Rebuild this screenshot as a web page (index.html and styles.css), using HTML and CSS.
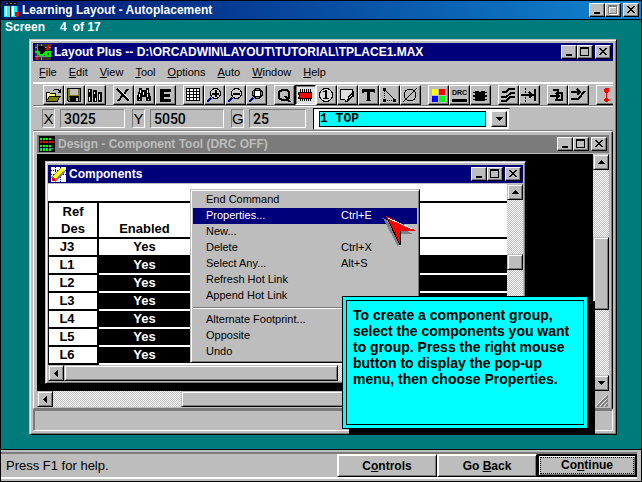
FILE: index.html
```html
<!DOCTYPE html>
<html lang="en">
<head>
<meta charset="utf-8">
<title>Learning Layout - Autoplacement</title>
<link rel="stylesheet" href="styles.css">
</head>
<body>
<svg class="defs" aria-hidden="true">
  <symbol id="i-min" viewBox="0 0 12 10"><path d="M3 7h6v2H3z"/></symbol>
  <symbol id="i-max" viewBox="0 0 12 10"><path fill-rule="evenodd" d="M1 0h9v9H1zM2 2v6h7V2z"/></symbol>
  <symbol id="i-close" viewBox="0 0 12 10"><path d="M2 1h2v1h1v1h2v-1h1v-1h2v1h-1v1h-1v1h-1v1h1v1h1v1h1v1h-2v-1h-1v-1h-2v1h-1v1h-2v-1h1v-1h1v-1h1v-1h-1v-1h-1v-1h-1z"/></symbol>
  <symbol id="i-up" viewBox="0 0 7 4"><path d="M3 0h1v1h1v1h1v1h1v1H0V3h1V2h1V1h1z"/></symbol>
  <symbol id="i-down" viewBox="0 0 7 4"><path d="M0 0h7v1H6v1H5v1H4v1H3V3H2V2H1V1H0z"/></symbol>
  <symbol id="i-left" viewBox="0 0 4 7"><path d="M0 3h1V2h1V1h1V0h1v7H3V6H2V5H1V4H0z"/></symbol>
</svg>

<header class="titlebar course-title">
  <svg class="app-icon" viewBox="0 0 16 16"><path fill="#111" d="M2 0h12v3H2z"/><path fill="#577" d="M3 1h2v1H3zM7 1h2v1H7zM11 1h2v1h-2z"/><path fill="#0ff" d="M1 4h6v11H1zM8 4h6v11H8z"/><path fill="#fff" d="M2 4h2v10H2zM9 4h2v10H9z"/><path fill="#000" d="M0 4h1v12H0zM7 5h1v11H7z"/><path fill="#f00" d="M12 10h4v4h-1v1h-2v-1h-1z"/><path fill="#0a0" d="M14 8h1v2h-1z"/></svg>
  <h1>Learning Layout - Autoplacement</h1>
  <div class="caps">
    <button aria-label="Minimize"><svg><use href="#i-min"/></svg></button><button aria-label="Maximize" class="off" disabled><svg><use href="#i-max"/></svg></button><button aria-label="Close" class="close"><svg><use href="#i-close"/></svg></button>
  </div>
</header>

<main class="desktop">
  <p class="counter"><span>Screen</span><span>4</span><span>of 17</span></p>

  <section class="window layout-window">
    <div class="titlebar">
      <svg class="app-icon" viewBox="0 0 16 16"><path fill="#333" d="M0 0h16v16H0z"/><path stroke="#888" d="M2.500 0v16M6.500 0v16M0 3.500h16M0 12.500h16"/><path fill="#000" d="M3 2h6l3 4-4 4H4z"/><path fill="none" stroke="#0e0" stroke-width="2" d="M0 8h3l2 3h3l2-2M11 8h4v4h-4z"/><path fill="none" stroke="#f00" stroke-width="2" d="M15 0l-3 6M2 13v3"/></svg>
      <h2>Layout Plus -- D:\ORCADWIN\LAYOUT\TUTORIAL\TPLACE1.MAX</h2>
      <div class="caps">
        <button aria-label="Minimize"><svg><use href="#i-min"/></svg></button><button aria-label="Maximize"><svg><use href="#i-max"/></svg></button><button aria-label="Close" class="close"><svg><use href="#i-close"/></svg></button>
      </div>
    </div>

    <nav class="menubar">
      <button><u>F</u>ile</button><button><u>E</u>dit</button><button><u>V</u>iew</button><button><u>T</u>ool</button><button><u>O</u>ptions</button><button><u>A</u>uto</button><button><u>W</u>indow</button><button><u>H</u>elp</button>
    </nav>

    <div class="toolbar">
      <div class="group">
        <button aria-label="Open"><svg viewBox="0 0 16 16"><path fill="#ff8" d="M1 5h4l1 1h5v3H4l-3 5z"/><path fill="#808000" d="M5 9h11l-4 5H1z"/><path fill="none" stroke="#000" d="M1 14.500h11M1.500 14V5.500h3l1 1h5V9M4.500 9.500H15l-3 5M1.500 14l3-4.500M8 3.500l2-1h3l2 2M15.500 2v3H13"/></svg></button>
        <button aria-label="Save"><svg viewBox="0 0 16 16"><path d="M1 1h14v14H2l-1-1z"/><path fill="#808000" d="M2 2h12v12H3l-1-1z"/><path fill="#c0c0c0" d="M4 2h8v6H4z"/><path d="M3 9h10v1H3zM4 10h9v5H4z"/><path fill="#c0c0c0" d="M10 11h2v3h-2z"/></svg></button>
        <button aria-label="Library"><svg viewBox="0 0 16 16"><path d="M1 2h4v13H1zM6 3h4v12H6zM11 5h4v10h-4z"/><path fill="#fff" d="M2 3h1v2H2zM2 10h1v4H2zM7 5h1v2H7zM8 11h1v3H8zM12 7h1v6h-1z"/></svg></button>
      </div>
      <div class="group">
        <button aria-label="Delete"><svg viewBox="0 0 16 16"><path fill="none" stroke="#000" stroke-width="2" d="M2 2l12 12M13 2L3 14"/><path stroke="#fff" d="M4 2l11 11"/></svg></button>
        <button aria-label="Find"><svg viewBox="0 0 16 16"><path d="M3 1h3v2h4V1h3v3l2 6v4h-5v-4H6v4H1v-4l2-6z"/><path fill="#fff" d="M4 3h1v3H4zM3 7h1v3H3zM11 3h1v3h-1zM11 7h1v3h-1zM7 5h1v3H7zM3 12h1v1H3zM12 12h1v1h-1z"/></svg></button>
        <button aria-label="Edit"><svg viewBox="0 0 16 16"><path d="M3 2h11v3H7v2h6v3H7v2h7v3H3z"/></svg></button>
      </div>
      <div class="group">
        <button aria-label="Spreadsheet"><svg viewBox="0 0 16 16"><path fill="#fff" d="M2 2h13v12H2z"/><path fill="none" stroke="#000" d="M1.500 1.500h13v12h-13zM1 4.500h14M1 7.500h14M1 10.500h14M4.500 1v13M8.500 1v13M11.500 1v13"/></svg></button>
        <button aria-label="Zoom in"><svg viewBox="0 0 16 16"><circle cx="9.500" cy="6.500" r="5" fill="#d0d0d0" stroke="#000"/><path stroke="#000" stroke-width="2" d="M6 7h7M10 3v7"/><path stroke="#000080" stroke-width="2" d="M5 11l-4 4"/></svg></button>
        <button aria-label="Zoom out"><svg viewBox="0 0 16 16"><circle cx="9.500" cy="6.500" r="5" fill="#d0d0d0" stroke="#000"/><path stroke="#000" stroke-width="2" d="M6 7h7"/><path stroke="#000080" stroke-width="2" d="M5 11l-4 4"/></svg></button>
        <button aria-label="Zoom all"><svg viewBox="0 0 16 16"><circle cx="9.500" cy="6.500" r="5" fill="#888" stroke="#000"/><path fill="#fff" stroke="#000" d="M6.500 3.500h6v6h-6z"/><path stroke="#000080" stroke-width="2" d="M5 11l-4 4"/></svg></button>
      </div>
      <div class="group">
        <button aria-label="Query"><svg viewBox="0 0 16 16"><path fill="none" stroke="#000" stroke-width="2" d="M6 3h5l2 2v6l-2 2H6l-3-2V5zM9 9l5 6"/></svg></button>
        <button aria-label="Component" aria-pressed="true" class="pressed"><svg viewBox="0 0 16 16"><path stroke="#000" d="M3.500 2v12M5.500 2v12M7.500 2v12M9.500 2v12M11.500 2v12M13.500 2v12"/><path fill="#f00" stroke="#000" d="M1.500 5.500h13v6h-13V10h1V7h-1z"/></svg></button>
        <button aria-label="Pin"><svg viewBox="0 0 16 16"><circle cx="8" cy="8" r="6.500" fill="#d8d8d8" stroke="#000"/><path d="M7 3h2v8h2v1H5v-1h2V5H5V4h2z"/></svg></button>
        <button aria-label="Obstacle"><svg viewBox="0 0 16 16"><path fill="#e0e0e0" stroke="#000" d="M1.500 2.500h12V9l-5 5h-2l-1-2h-4z"/><path fill="none" stroke="#000" d="M14.500 4v5l-6 5 1-4 5-5"/></svg></button>
        <button aria-label="Text"><svg viewBox="0 0 16 16"><path d="M2 2h13v4h-1l-1-1h-3v8h1v1H6v-1h1V5H4L3 6H2z"/></svg></button>
        <button aria-label="Connection"><svg viewBox="0 0 16 16"><path fill="none" stroke="#000" stroke-dasharray="1 1" d="M3.500 4v9.500H13"/><path stroke="#000" d="M4 3l10 10"/><path d="M2 1h3v3H2zM2 12h3v3H2zM12 12h3v3h-3z"/></svg></button>
        <button aria-label="Error"><svg viewBox="0 0 16 16"><circle cx="8" cy="8" r="6" fill="none" stroke="#000"/><path stroke="#000" d="M15 1L1 15"/></svg></button>
      </div>
      <div class="group">
        <button aria-label="Colors"><svg viewBox="0 0 16 16"><path fill="#ff0" d="M2 2h6v6H2z"/><path fill="#f00" d="M9 2h6v6H9z"/><path fill="#00f" d="M2 9h6v6H2z"/><path fill="#0f0" d="M9 9h6v6H9z"/></svg></button>
        <button aria-label="Online DRC" class="drc"><span>DRC</span></button>
        <button aria-label="Reconnect"><svg viewBox="0 0 16 16"><path d="M1 5h14v1H1zM1 8h14v2H1zM1 12h14v1H1zM3 4h4v10H3zM9 4h4v10H9zM7 5h2v9H7z"/></svg></button>
      </div>
      <div class="group">
        <button aria-label="Auto path"><svg viewBox="0 0 16 16"><path fill="none" stroke="#000" stroke-width="2" d="M2 5h4l3-3h6M1 10h5l5-4h4M1 14h5l4-4h5"/></svg></button>
        <button aria-label="Shove"><svg viewBox="0 0 16 16"><path stroke="#000" stroke-dasharray="2 1" d="M4.500 1v14"/><path stroke="#000" stroke-width="2" d="M0 8h13M14 2v12M8 5l3 3-3 3" fill="none"/></svg></button>
      </div>
      <div class="group">
        <button aria-label="Edit segment"><svg viewBox="0 0 16 16"><path fill="none" stroke="#000" stroke-width="2" d="M4 3h5v3h4v7H6M1 9h10M7 6l3 3-3 3"/></svg></button>
        <button aria-label="Add route"><svg viewBox="0 0 16 16"><path fill="none" stroke="#000" stroke-width="2" d="M1 5h9M7 2l3 3-3 3M1 12h7l7-8"/></svg></button>
      </div>
      <div class="group">
        <button aria-label="Alert"><svg viewBox="0 0 16 16"><path fill="#f00" d="M7 1h3l1 1v3h-1v1H9v5h1v1h1v2h-1v1H7v-1H6v-2h1v-1h1V6H7V5H6V2z"/></svg></button>
      </div>
    </div>

    <div class="coords">
      <label for="cx">X</label><input id="cx" class="wx" value="3025" readonly>
      <label for="cy">Y</label><input id="cy" class="wy" value="5050" readonly>
      <label for="cg">G</label><input id="cg" class="wg" value="25" readonly>
      <div class="combo"><select aria-label="Layer"><option>1 TOP</option></select><span class="drop"><svg class="tri"><use href="#i-down"/></svg></span></div>
    </div>

    <section class="child">
      <div class="titlebar inactive">
        <svg class="app-icon" viewBox="0 0 16 16"><path d="M0 0h16v16H0z"/><path stroke="#0f0" stroke-width="2" stroke-dasharray="2 1" d="M1 3h12M1 10h12M1 14h12"/><path stroke="#f00" stroke-width="2" stroke-dasharray="2 1" d="M1 6h13"/><path stroke="#0cc" stroke-dasharray="2 1" d="M1 12.500h13"/><path fill="#00f" d="M14 3h1v12h-1z"/></svg>
        <h2>Design - Component Tool (DRC OFF)</h2>
        <div class="caps">
          <button aria-label="Minimize"><svg><use href="#i-min"/></svg></button><button aria-label="Maximize"><svg><use href="#i-max"/></svg></button><button aria-label="Close" class="close"><svg><use href="#i-close"/></svg></button>
        </div>
      </div>
      <div class="canvas-grid">
        <div class="canvas">
          <section class="window components">
            <div class="titlebar">
              <svg class="app-icon" viewBox="0 0 16 16"><path fill="#fff" d="M1 1h15v15H1z"/><path stroke="#00c" stroke-dasharray="1 1" d="M1 4.500h15M1 8.500h15M5.500 1v15M10.500 1v15"/><path stroke="#808080" stroke-width="6" d="M3 14L13 4"/><path stroke="#ff0" stroke-width="4" d="M4 12l9-9"/><path fill="#f00" d="M2 12h3v3H2z"/></svg>
              <h2>Components</h2>
              <div class="caps">
                <button aria-label="Minimize"><svg><use href="#i-min"/></svg></button><button aria-label="Maximize"><svg><use href="#i-max"/></svg></button><button aria-label="Close" class="close"><svg><use href="#i-close"/></svg></button>
              </div>
            </div>
            <div class="sheet-grid">
              <table class="sheet">
                <thead><tr><th>Ref<br>Des</th><th>Enabled</th><th></th></tr></thead>
                <tbody>
                  <tr><th>J3</th><td>Yes</td><td></td></tr>
                  <tr class="sel"><th>L1</th><td>Yes</td><td></td></tr>
                  <tr class="sel"><th>L2</th><td>Yes</td><td></td></tr>
                  <tr class="sel"><th>L3</th><td>Yes</td><td></td></tr>
                  <tr class="sel"><th>L4</th><td>Yes</td><td></td></tr>
                  <tr class="sel"><th>L5</th><td>Yes</td><td></td></tr>
                  <tr class="sel"><th>L6</th><td>Yes</td><td></td></tr>
                </tbody>
              </table>
              <div class="scroll v"><button aria-label="Scroll up"><svg class="tri"><use href="#i-up"/></svg></button><i class="space-a"></i><i class="thumb small"></i></div>
              <div class="scroll h"><button aria-label="Scroll left"><svg class="tri side"><use href="#i-left"/></svg></button><i class="thumb wide"></i></div>
            </div>
          </section>
        </div>
        <div class="scroll v"><button aria-label="Scroll up"><svg class="tri"><use href="#i-up"/></svg></button><i class="space-b"></i><i class="thumb tall"></i><i class="fill"></i><button aria-label="Scroll down"><svg class="tri"><use href="#i-down"/></svg></button></div>
        <div class="scroll h"><button aria-label="Scroll left"><svg class="tri side"><use href="#i-left"/></svg></button><i class="space-c"></i><i class="thumb fill"></i></div>
        <svg class="grip" viewBox="0 0 15 16"><path stroke="#fff" d="M3 15L14 4M7 15l7-7M11 15l3-3"/><path stroke="#808080" stroke-width="2" d="M4 16L15 5M8 16l7-7M12 16l3-3"/></svg>
      </div>
    </section>
    <div class="pane"></div>
  </section>

  <div class="popup">
    <button>End Command</button>
    <button class="hot"><span>Properties...</span><span>Ctrl+E</span></button>
    <button>New...</button>
    <button><span>Delete</span><span>Ctrl+X</span></button>
    <button><span>Select Any...</span><span>Alt+S</span></button>
    <button>Refresh Hot Link</button>
    <button>Append Hot Link</button>
    <hr>
    <button>Alternate Footprint...</button>
    <button>Opposite</button>
    <button>Undo</button>
  </div>

  <svg class="pointer" viewBox="0 0 34 34"><path fill="#808080" d="M0 2l15 29 3-13h12z"/><path fill="#f00" d="M3 0l29 14v1H17v15z"/><path fill="none" stroke="#fff" d="M5 2l24 11"/><path fill="none" stroke="#000" d="M5 4l12 25V15"/></svg>

  <aside class="callout"><p>To create a component group, select the components you want to group. Press the right mouse button to display the pop-up menu, then choose Properties.</p></aside>
</main>

<footer class="status">
  <div class="status-in">
    <p>Press F1 for help.</p>
    <button>C<u>o</u>ntrols</button><button>Go <u>B</u>ack</button><button class="default"><span>Co<u>n</u>tinue</span></button>
  </div>
</footer>
</body>
</html>
```
FILE: styles.css
```css
* { box-sizing: border-box; }
body {
  margin: 0;
  height: 100vh;
  display: flex;
  flex-direction: column;
  border: 1px solid #000;
  overflow: hidden;
  background: #007b7b;
  color: #000;
  font: 12px/16px "Liberation Sans", sans-serif;
}
h1, h2, p { margin: 0; font-size: 12px; }
button, input, select { font: inherit; color: inherit; margin: 0; padding: 0; border: 0; border-radius: 0; background: none; }
svg { display: block; shape-rendering: crispEdges; }
.defs { position: absolute; width: 0; height: 0; }

.titlebar {
  display: flex;
  align-items: center;
  height: 18px;
  flex: none;
  padding: 0 2px;
  background: #00007b;
  color: #fff;
}
.titlebar h1, .titlebar h2 { flex: 1; margin-left: 3px; font-weight: bold; white-space: nowrap; }
.course-title { height: 19px; border-bottom: 1px solid #000; background: linear-gradient(90deg, #00207b 10%, #1084d0); }
.inactive { background: #7b7b7b; color: #bdbdbd; }
.app-icon { width: 16px; height: 16px; }
.caps { display: flex; }
.caps button {
  width: 16px;
  height: 14px;
  padding: 1px;
  background: #bdbdbd;
  border: 1px solid;
  border-color: #fff #000 #000 #fff;
  box-shadow: inset -1px -1px #7b7b7b;
}
.caps svg { width: 12px; height: 10px; fill: #000; }
.caps .off svg { fill: #7b7b7b; filter: drop-shadow(1px 1px #fff); }
.caps .close { margin-left: 2px; }

.desktop { position: relative; flex: 1; min-height: 0; }
.counter { display: flex; padding: 0 4px; font-weight: bold; line-height: 14px; color: #fff; }
.counter span { margin-right: 15px; }
.counter span + span { margin-right: 6px; }

.window {
  position: absolute;
  display: flex;
  flex-direction: column;
  background: #bdbdbd;
  border: 1px solid;
  border-color: #bdbdbd #000 #000 #bdbdbd;
  box-shadow: inset 1px 1px #fff, inset -1px -1px #7b7b7b;
  padding: 3px;
}
.layout-window { inset: 19px 24px 14px 28px; }

.menubar, .popup { font-size: 11px; line-height: 14px; }
.menubar { display: flex; height: 21px; flex: none; align-items: center; padding-left: 6px; gap: 12px; }
.toolbar { display: flex; gap: 7px; height: 24px; flex: none; padding: 1px 0 0 10px; border-top: 2px solid #fff; border-bottom: 1px solid #7b7b7b; overflow: hidden; }
.group { display: flex; flex: none; }
.group button {
  width: 21px;
  height: 20px;
  padding: 1px;
  border: 1px solid;
  border-color: #fff #000 #000 #fff;
  box-shadow: inset -1px -1px #7b7b7b;
}
.group svg { width: 16px; height: 16px; }
.group .pressed { background: #e0e0e0; border-color: #000 #fff #fff #000; box-shadow: inset 1px 1px #7b7b7b; }
.drc span { display: block; height: 14px; border-bottom: 3px solid #000; margin: 0 1px; font: bold 7px/10px "Liberation Sans", sans-serif; }

.coords {
  display: flex;
  align-items: center;
  flex: none;
  height: 25px;
  padding-left: 9px;
  border-top: 1px solid #fff;
  border-bottom: 1px solid #7b7b7b;
  font-size: 15px;
}
.coords label, .coords input { height: 19px; border: 1px solid; border-color: #7b7b7b #fff #fff #7b7b7b; line-height: 17px; }
.coords label { width: 13px; margin-right: 5px; text-align: center; }
.coords input { padding-left: 3px; margin-right: 7px; font: 500 14px/17px Roboto, "Liberation Sans", sans-serif; }
.coords .wx { width: 65px; }
.coords .wy { width: 74px; }
.coords .wg { width: 57px; }
.combo { display: flex; width: 197px; height: 22px; padding: 2px 2px 2px 5px; gap: 5px; background: #fff; border: 1px solid; border-color: #000 #bdbdbd #bdbdbd #000; }
.combo select { appearance: none; flex: 1; height: 16px; background: #0ff; border: 1px solid #000; font: bold 13px/14px "Liberation Mono", monospace; }
.drop { width: 16px; display: grid; place-items: center; background: #bdbdbd; border: 1px solid; border-color: #fff #000 #000 #fff; box-shadow: inset -1px -1px #7b7b7b; }
.tri { width: 7px; height: 4px; fill: #000; }
.tri.side { width: 4px; height: 7px; }

.child {
  flex: 1;
  min-height: 0;
  display: flex;
  flex-direction: column;
  padding: 3px 3px 1px 3px;
  border: 1px solid;
  border-color: #fff #000 #7b7b7b #fff;
  box-shadow: inset -1px 0 #7b7b7b;
}
.canvas-grid, .sheet-grid { display: grid; grid-template: minmax(0, 1fr) 16px / minmax(0, 1fr) 16px; flex: 1; min-height: 0; }
.canvas-grid { margin-top: 1px; }
.canvas { position: relative; background: #000; }
.scroll { display: flex; background: repeating-conic-gradient(#fff 0 25%, #bdbdbd 0 50%) 0 0 / 2px 2px; }
.scroll.v { flex-direction: column; }
.scroll button, .thumb { background: #bdbdbd; border: 1px solid; border-color: #bdbdbd #000 #000 #bdbdbd; box-shadow: inset 1px 1px #fff, inset -1px -1px #7b7b7b; }
.scroll button { width: 16px; height: 16px; flex: none; display: grid; place-items: center; }
.small { height: 16px; }
.wide { width: 274px; }
.tall { height: 73px; }
.space-a { height: 54px; }
.space-b { height: 67px; }
.space-c { width: 128px; }
.fill { flex: 1; }
.grip { width: 15px; height: 16px; }
.pane { height: 22px; flex: none; border: 1px solid; border-color: #7b7b7b #fff #fff #7b7b7b; box-shadow: inset 1px 1px #7b7b7b; }

.components { inset: 7px 67px 7px 8px; padding: 3px 2px 2px; }
.sheet-grid { margin-top: 1px; overflow: hidden; background: #fff; }
.sheet { width: 100%; border-collapse: separate; border-spacing: 0; table-layout: fixed; margin-top: 17px; align-self: start; font-size: 13px; }
.sheet th, .sheet td { height: 18px; padding: 0; line-height: 16px; font-weight: bold; text-align: center; border-bottom: 2px solid #000; }
.sheet thead th { height: 38px; line-height: 17px; border-top: 2px solid #000; vertical-align: bottom; }
.sheet tr > :first-child { width: 51px; border-left: 1px solid #000; border-right: 2px solid #000; }
.sheet thead th:nth-child(2) { width: 91px; }
.sheet tbody th { padding-right: 12px; }
.sheet .sel td { background: #000; color: #fff; border-bottom-color: #fff; }

.popup {
  position: absolute;
  left: 189px;
  top: 169px;
  width: 230px;
  padding: 2px;
  display: flex;
  flex-direction: column;
  background: #bdbdbd;
  border: 1px solid;
  border-color: #bdbdbd #000 #000 #bdbdbd;
  box-shadow: inset 1px 1px #fff, inset -1px -1px #7b7b7b;
}
.popup button { display: grid; grid-template-columns: 135px 1fr; align-content: start; height: 16px; padding-left: 13px; text-align: left; white-space: nowrap; }
.popup .hot { background: #00007b; color: #fff; }
.popup hr { width: 100%; margin: 3px 0; border: 0; height: 2px; border-top: 1px solid #7b7b7b; border-bottom: 1px solid #fff; }
.pointer { position: absolute; left: 382px; top: 196px; width: 34px; height: 34px; }
.callout { position: absolute; left: 341px; right: 53px; top: 276px; padding: 3px; background: #0ff; border: 1px solid #000; box-shadow: 7px 5px #000; }
.callout p { min-height: 125px; padding: 6px; border: 1px solid #000; font-size: 14px; font-weight: bold; }

.status { flex: none; background: #bdbdbd; border-top: 1px solid #000; padding: 2px 4px 2px 0; }
.status-in { display: flex; align-items: center; border-top: 2px solid #7b7b7b; border-bottom: 2px solid #fff; }
.status p { flex: 1; padding-left: 5px; font-size: 13px; }
.status button { width: 100px; height: 23px; font-weight: bold; border: 1px solid; border-color: #fff #000 #000 #fff; box-shadow: inset 1px 1px #fff, inset -1px -1px #7b7b7b; }
.status .default { border: 2px solid #000; padding: 1px; }
.default span { display: block; border: 1px dotted #000; line-height: 15px; }
```
